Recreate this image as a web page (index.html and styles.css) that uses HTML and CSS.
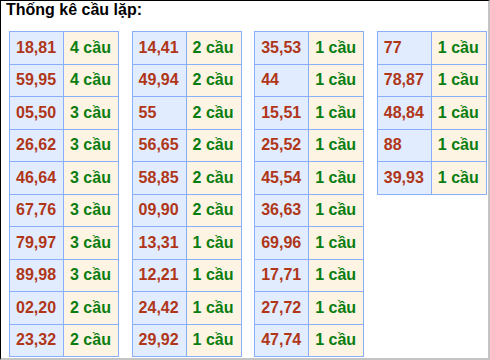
FILE: index.html
```html
<!DOCTYPE html>
<html lang="vi">
<head>
<meta charset="utf-8">
<title>Thống kê cầu lặp</title>
<link rel="stylesheet" href="styles.css">
</head>
<body>
<div class="page">
  <div class="title">Thống kê cầu lặp:</div>
  <div class="tables">
    <div class="tbl">
      <div class="num">18,81</div><div class="cnt">4 cầu</div>
      <div class="num">59,95</div><div class="cnt">4 cầu</div>
      <div class="num">05,50</div><div class="cnt">3 cầu</div>
      <div class="num">26,62</div><div class="cnt">3 cầu</div>
      <div class="num">46,64</div><div class="cnt">3 cầu</div>
      <div class="num">67,76</div><div class="cnt">3 cầu</div>
      <div class="num">79,97</div><div class="cnt">3 cầu</div>
      <div class="num">89,98</div><div class="cnt">3 cầu</div>
      <div class="num">02,20</div><div class="cnt">2 cầu</div>
      <div class="num">23,32</div><div class="cnt">2 cầu</div>
    </div>
    <div class="tbl">
      <div class="num">14,41</div><div class="cnt">2 cầu</div>
      <div class="num">49,94</div><div class="cnt">2 cầu</div>
      <div class="num">55</div><div class="cnt">2 cầu</div>
      <div class="num">56,65</div><div class="cnt">2 cầu</div>
      <div class="num">58,85</div><div class="cnt">2 cầu</div>
      <div class="num">09,90</div><div class="cnt">2 cầu</div>
      <div class="num">13,31</div><div class="cnt">1 cầu</div>
      <div class="num">12,21</div><div class="cnt">1 cầu</div>
      <div class="num">24,42</div><div class="cnt">1 cầu</div>
      <div class="num">29,92</div><div class="cnt">1 cầu</div>
    </div>
    <div class="tbl">
      <div class="num">35,53</div><div class="cnt">1 cầu</div>
      <div class="num">44</div><div class="cnt">1 cầu</div>
      <div class="num">15,51</div><div class="cnt">1 cầu</div>
      <div class="num">25,52</div><div class="cnt">1 cầu</div>
      <div class="num">45,54</div><div class="cnt">1 cầu</div>
      <div class="num">36,63</div><div class="cnt">1 cầu</div>
      <div class="num">69,96</div><div class="cnt">1 cầu</div>
      <div class="num">17,71</div><div class="cnt">1 cầu</div>
      <div class="num">27,72</div><div class="cnt">1 cầu</div>
      <div class="num">47,74</div><div class="cnt">1 cầu</div>
    </div>
    <div class="tbl">
      <div class="num">77</div><div class="cnt">1 cầu</div>
      <div class="num">78,87</div><div class="cnt">1 cầu</div>
      <div class="num">48,84</div><div class="cnt">1 cầu</div>
      <div class="num">88</div><div class="cnt">1 cầu</div>
      <div class="num">39,93</div><div class="cnt">1 cầu</div>
    </div>
  </div>
</div>
</body>
</html>
```
FILE: styles.css
```css
html, body {
  margin: 0;
  padding: 0;
  background: #fff;
}
.page {
  box-sizing: border-box;
  width: 490px;
  height: 360px;
  overflow: hidden;
  border-top: 1px solid #000;
  border-left: 1px solid #000;
  border-right: 2px solid #c4c4c4;
  border-bottom: 2px solid #c4c4c4;
  font-family: "Liberation Sans", Arial, sans-serif;
  font-size: 16px;
  font-weight: bold;
}
.title {
  padding-left: 5px;
  color: #000;
  line-height: 18px;
}
.tables {
  display: flex;
  align-items: flex-start;
  gap: 12.6px;
  margin: 12px 0 0 8px;
}
.tbl {
  display: grid;
  grid-template-columns: 54px 55px;
  border-top: 1px solid #8aaef8;
  border-left: 1px solid #8aaef8;
}
.num, .cnt {
  box-sizing: border-box;
  height: 32.5px;
  display: flex;
  align-items: center;
  padding-left: 6px;
  border-right: 1px solid #8aaef8;
  border-bottom: 1px solid #8aaef8;
  white-space: nowrap;
}
.num {
  background: #e1edfe;
  color: #b0361a;
}
.cnt {
  background: #fef4e3;
  color: #0a7d10;
}
```
